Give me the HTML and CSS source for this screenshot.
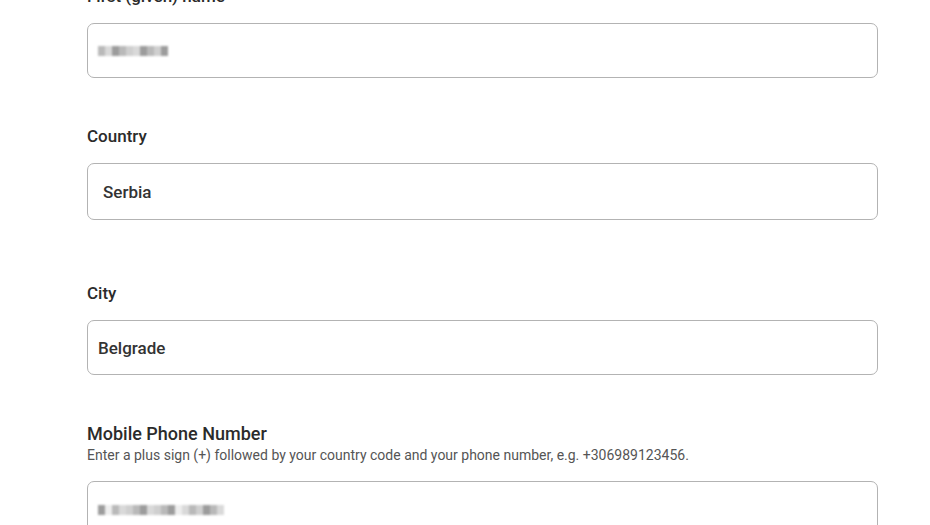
FILE: index.html
```html
<!DOCTYPE html>
<html>
<head>
<meta charset="utf-8">
<link rel="stylesheet" href="styles.css">
</head>
<body>
<form class="form">
  <div class="group first">
    <label class="label">First (given) name</label>
    <div class="field pad-a"><span class="mosaic"><i class="m2"></i><i class="m1"></i><i class="m3"></i><i class="m2"></i><i class="m4"></i><i class="m1"></i><i class="m3"></i><i class="m2"></i><i class="m4"></i><i class="m3"></i></span></div>
  </div>
  <div class="group g2">
    <label class="label">Country</label>
    <div class="field tall pad-b">Serbia</div>
  </div>
  <div class="group g3">
    <label class="label">City</label>
    <div class="field pad-a">Belgrade</div>
  </div>
  <div class="group g4">
    <label class="label big">Mobile Phone Number</label>
    <p class="help">Enter a plus sign (+) followed by your country code and your phone number, e.g. +306989123456.</p>
    <div class="field tall pad-a"><span class="mosaic"><i class="m3"></i><i class="m5"></i><i class="m2"></i><i class="m1"></i><i class="m4"></i><i class="m2"></i><i class="m3"></i><i class="m1"></i><i class="m4"></i><i class="m2"></i><i class="m3"></i><i class="m5"></i><i class="m1"></i><i class="m2"></i><i class="m4"></i><i class="m3"></i><i class="m2"></i><i class="m1"></i></span></div>
  </div>
</form>
</body>
</html>
```
FILE: styles.css
```css
html, body {
  margin: 0;
  padding: 0;
  background: #ffffff;
}
body {
  font-family: Roboto, "Liberation Sans", Arial, sans-serif;
  color: #2e2e2e;
  overflow: hidden;
  height: 525px;
}
.form {
  width: 791px;
  margin: -16px 0 0 87px;
  display: flex;
  flex-direction: column;
}
.group {
  display: flex;
  flex-direction: column;
}
.label {
  font-size: 17px;
  font-weight: 500;
  line-height: 24px;
  margin-bottom: 15px;
  color: #2b2b2b;
}
.label.big {
  font-size: 18px;
  margin-bottom: 0;
}
.g2 { margin-top: 46px; }
.g3 { margin-top: 61px; }
.g4 { margin-top: 47px; }
.help {
  margin: 0 0 17px 0;
  font-size: 14px;
  line-height: 18px;
  color: #555;
}
.field {
  box-sizing: border-box;
  height: 55px;
  border: 1.5px solid #b3b3b3;
  border-radius: 7px;
  display: flex;
  align-items: center;
  font-size: 17px;
  font-weight: 500;
  color: #333;
}
.field.tall { height: 57px; }
.pad-a { padding-left: 10px; }
.pad-b { padding-left: 15px; }
.mosaic {
  display: flex;
  height: 10px;
  filter: blur(0.8px);
}
.mosaic i {
  display: block;
  width: 7px;
  height: 10px;
}
.m1 { background: #d9d9d9; }
.m2 { background: #b9b9b9; }
.m3 { background: #9c9c9c; }
.m4 { background: #cfcfcf; }
.m5 { background: #eeeeee; }
```
